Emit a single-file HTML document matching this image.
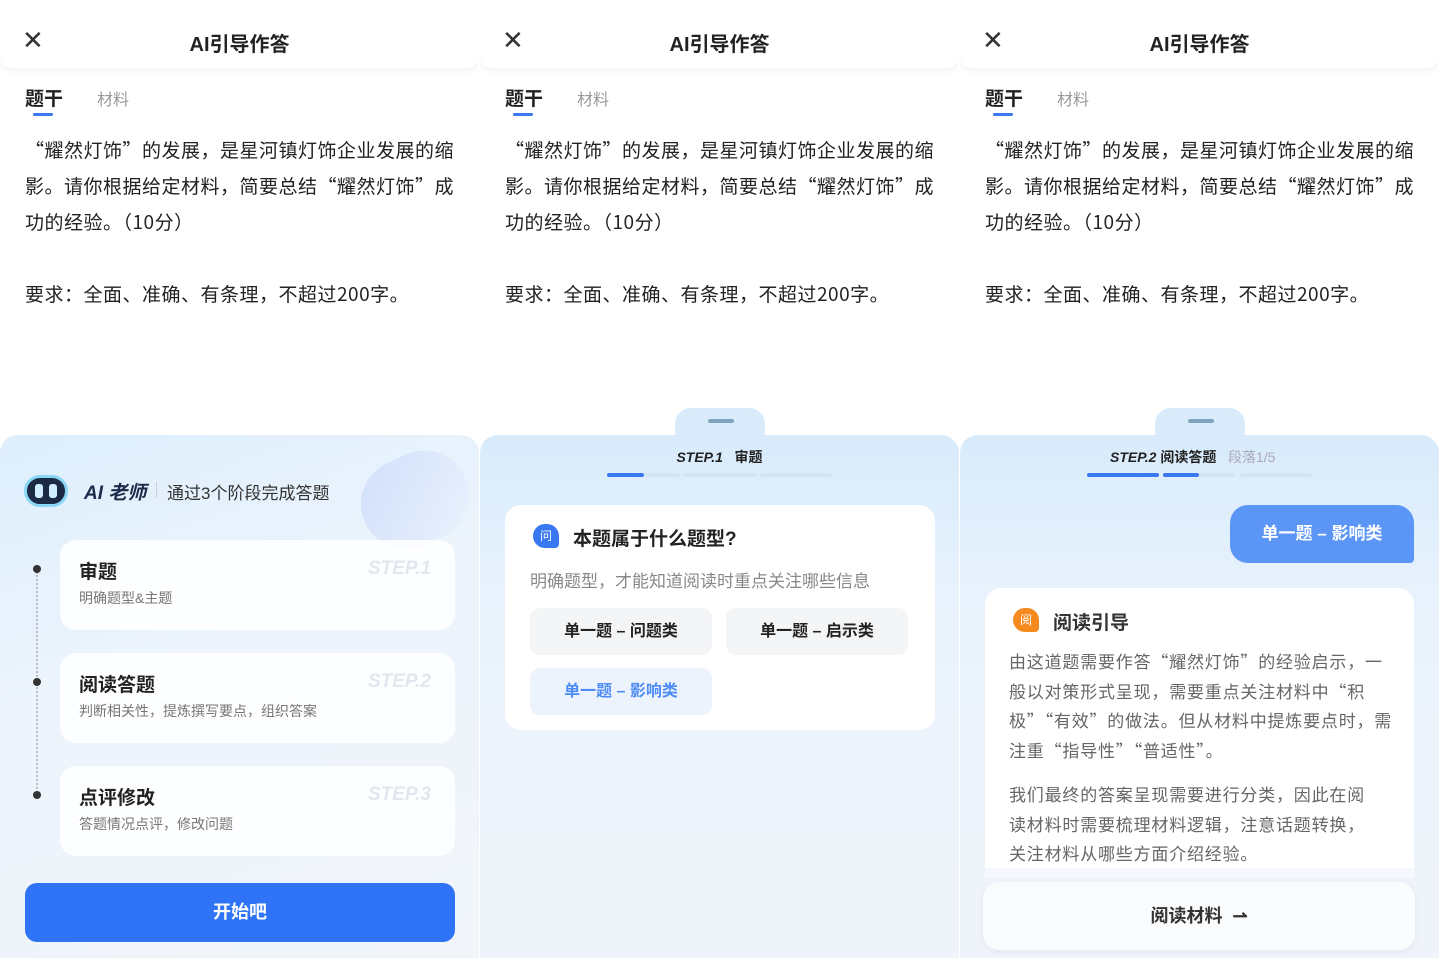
<!DOCTYPE html>
<html><head><meta charset="utf-8"><style>
*{margin:0;padding:0;box-sizing:border-box}
body{width:1439px;height:958px;background:#fff;font-family:"Liberation Sans","Noto Sans CJK SC",sans-serif;color:#222;position:relative;overflow:hidden}
.p{position:absolute;top:0;width:479px;height:958px;overflow:hidden;background:#fff}
.a{position:absolute}
.hd{left:0;top:0;width:479px;height:68px;background:#fff;box-shadow:0 3px 8px rgba(0,0,0,.05);border-radius:0 0 12px 12px}
.x{left:22px;top:30px;font-size:26px;line-height:20px;color:#333}
.tt{left:0;width:479px;top:28px;text-align:center;font-size:20px;font-weight:bold;color:#222}
.t1{left:25px;top:84px;font-size:19px;font-weight:bold}
.t2{left:97px;top:86px;font-size:16px;color:#999}
.ul{left:33px;top:113px;width:20px;height:3px;border-radius:2px;background:#3a78f2}
.tx{left:25px;top:132px;width:440px;font-size:19px;letter-spacing:0.5px;line-height:36px;color:#222;font-family:"Noto Sans CJK SC",sans-serif}
.sheet{left:0;top:435px;width:479px;height:530px;border-radius:18px 18px 0 0;background:linear-gradient(180deg,#d8ebfb 0%,#eaf3fc 35%,#eff4fa 100%)}
.bump{left:195px;top:408px;width:90px;height:40px;border-radius:16px 16px 0 0;background:#d9ebfb}
.bar{left:228px;top:419px;width:26px;height:4px;border-radius:2px;background:#7fa3bd}
.card{background:#fff;border-radius:16px}
.sc{left:60px;width:395px;height:90px;background:rgba(255,255,255,.85);border-radius:16px}
.sc b{position:absolute;left:19px;top:17px;font-size:19px}
.sc span{position:absolute;left:19px;top:48px;font-size:14px;color:#777}
.sc i{position:absolute;right:24px;top:18px;font-size:19px;font-weight:bold;color:#e2e6ee;font-family:"Liberation Sans",sans-serif}
.dot{left:33px;width:8px;height:8px;border-radius:50%;background:#333}
.opt{height:47px;border-radius:10px;background:#f4f5f7;font-size:16px;font-weight:bold;text-align:center;line-height:47px;color:#222}
.prog{top:473px;height:4px;border-radius:2px}
.gt{font-size:17px;letter-spacing:0.8px;line-height:29.5px;color:#666;font-family:"Noto Sans CJK SC",sans-serif}
</style></head><body>

<!-- Panel 1 -->
<div class="p" style="left:0">
<div class="a hd"></div><div class="a x">✕</div><div class="a tt">AI引导作答</div>
<div class="a t1">题干</div><div class="a t2">材料</div><div class="a ul"></div>
<div class="a tx">“耀然灯饰”的发展，是星河镇灯饰企业发展的缩影。请你根据给定材料，简要总结“耀然灯饰”成功的经验。（10分）<br><br>要求：全面、准确、有条理，不超过200字。</div>
<div class="a" style="left:0;top:435px;width:479px;height:530px;border-radius:18px 18px 0 0;background:linear-gradient(160deg,#ddeefc 0%,#edf4fc 40%,#f1f5fa 100%)"></div>
<div class="a" style="left:360px;top:455px;width:110px;height:90px;border-radius:45px;background:linear-gradient(135deg,rgba(200,215,250,.7),rgba(230,238,252,.3));transform:rotate(-25deg)"></div>
<div class="a" style="left:24px;top:475px;width:44px;height:32px;border-radius:16px;background:#1b2a45;border:3px solid #8ad6f5"></div>
<div class="a" style="left:35px;top:484px;width:8px;height:14px;border-radius:3px;background:#cfeeff"></div>
<div class="a" style="left:49px;top:484px;width:8px;height:14px;border-radius:3px;background:#cfeeff"></div>
<div class="a" style="left:84px;top:478px;font-size:19px;font-weight:bold;font-style:italic;color:#1c2b4a">AI 老师</div>
<div class="a" style="left:156px;top:482px;width:1px;height:16px;background:#ccd"></div>
<div class="a" style="left:167px;top:479px;font-size:17px;color:#333">通过3个阶段完成答题</div>
<div class="a" style="left:36px;top:572px;height:225px;border-left:2px dotted #bbc"></div>
<div class="a dot" style="top:565px"></div><div class="a dot" style="top:678px"></div><div class="a dot" style="top:791px"></div>
<div class="a sc" style="top:540px"><b>审题</b><span>明确题型&amp;主题</span><i>STEP.1</i></div>
<div class="a sc" style="top:653px"><b>阅读答题</b><span>判断相关性，提炼撰写要点，组织答案</span><i>STEP.2</i></div>
<div class="a sc" style="top:766px"><b>点评修改</b><span>答题情况点评，修改问题</span><i>STEP.3</i></div>
<div class="a" style="left:25px;top:883px;width:430px;height:59px;border-radius:12px;background:#2f74f6;color:#fff;font-size:18px;font-weight:bold;text-align:center;line-height:59px">开始吧</div>
</div>

<!-- Panel 2 -->
<div class="p" style="left:480px">
<div class="a hd"></div><div class="a x">✕</div><div class="a tt">AI引导作答</div>
<div class="a t1">题干</div><div class="a t2">材料</div><div class="a ul"></div>
<div class="a tx">“耀然灯饰”的发展，是星河镇灯饰企业发展的缩影。请你根据给定材料，简要总结“耀然灯饰”成功的经验。（10分）<br><br>要求：全面、准确、有条理，不超过200字。</div>
<div class="a sheet"></div><div class="a bump"></div><div class="a bar"></div>
<div class="a" style="left:0;width:479px;top:447px;text-align:center;font-size:14px;font-weight:bold;color:#222"><i>STEP.1</i>&nbsp;&nbsp; 审题</div>
<div class="a prog" style="left:127px;width:37px;background:#3a78f2"></div>
<div class="a prog" style="left:164px;width:36px;background:#d3e4f5"></div>
<div class="a prog" style="left:204px;width:72px;background:#d3e4f5"></div>
<div class="a prog" style="left:280px;width:72px;background:#d3e4f5"></div>
<div class="a card" style="left:25px;top:505px;width:430px;height:225px"></div>
<div class="a" style="left:53px;top:524px;width:26px;height:24px;border-radius:12px 12px 4px 12px;background:#3a78f2;color:#fff;font-size:12px;text-align:center;line-height:24px">问</div>
<div class="a" style="left:93px;top:524px;font-size:19px;font-weight:bold">本题属于什么题型?</div>
<div class="a" style="left:50px;top:567px;font-size:17px;color:#888">明确题型，才能知道阅读时重点关注哪些信息</div>
<div class="a opt" style="left:50px;top:608px;width:182px">单一题 – 问题类</div>
<div class="a opt" style="left:246px;top:608px;width:182px">单一题 – 启示类</div>
<div class="a opt" style="left:50px;top:668px;width:182px;background:#edf3fd;color:#4d8cf5">单一题 – 影响类</div>
</div>

<!-- Panel 3 -->
<div class="p" style="left:960px">
<div class="a hd"></div><div class="a x">✕</div><div class="a tt">AI引导作答</div>
<div class="a t1">题干</div><div class="a t2">材料</div><div class="a ul"></div>
<div class="a tx">“耀然灯饰”的发展，是星河镇灯饰企业发展的缩影。请你根据给定材料，简要总结“耀然灯饰”成功的经验。（10分）<br><br>要求：全面、准确、有条理，不超过200字。</div>
<div class="a sheet"></div><div class="a bump"></div><div class="a bar"></div>
<div class="a" style="left:150px;top:447px;font-size:14px;font-weight:bold;color:#222"><i>STEP.2</i>&nbsp;阅读答题&nbsp;&nbsp;&nbsp;<span style="font-weight:normal;color:#aab">段落1/5</span></div>
<div class="a prog" style="left:127px;width:72px;background:#3a78f2"></div>
<div class="a prog" style="left:203px;width:36px;background:#3a78f2"></div>
<div class="a prog" style="left:239px;width:36px;background:#d3e4f5"></div>
<div class="a prog" style="left:280px;width:72px;background:#d3e4f5"></div>
<div class="a" style="left:270px;top:505px;width:184px;height:58px;border-radius:18px 18px 4px 18px;background:#5b95f5;color:#fff;font-size:17px;font-weight:bold;text-align:center;line-height:58px">单一题 – 影响类</div>
<div class="a card" style="left:25px;top:588px;width:429px;height:290px;border-radius:16px 16px 0 0"></div>
<div class="a" style="left:53px;top:608px;width:26px;height:24px;border-radius:12px 12px 4px 12px;background:#f58a1f;color:#fff;font-size:12px;text-align:center;line-height:24px">阅</div>
<div class="a" style="left:93px;top:608px;font-size:19px;font-weight:bold;color:#333">阅读引导</div>
<div class="a gt" style="left:49px;top:646px;width:385px">由这道题需要作答“耀然灯饰”的经验启示，一般以对策形式呈现，需要重点关注材料中“积极”“有效”的做法。但从材料中提炼要点时，需注重“指导性”“普适性”。</div>
<div class="a gt" style="left:49px;top:779px;width:370px">我们最终的答案呈现需要进行分类，因此在阅读材料时需要梳理材料逻辑，注意话题转换，关注材料从哪些方面介绍经验。</div>
<div class="a" style="left:0;top:868px;width:479px;height:90px;background:linear-gradient(180deg,rgba(239,244,250,.6),#eff4fa)"></div>
<div class="a" style="left:23px;top:882px;width:432px;height:68px;border-radius:16px;background:#fafbfd;box-shadow:0 2px 8px rgba(0,0,0,.05);text-align:center;line-height:68px;font-size:18px;font-weight:bold;color:#333">阅读材料 &nbsp;⇀</div>
</div>
</body></html>
